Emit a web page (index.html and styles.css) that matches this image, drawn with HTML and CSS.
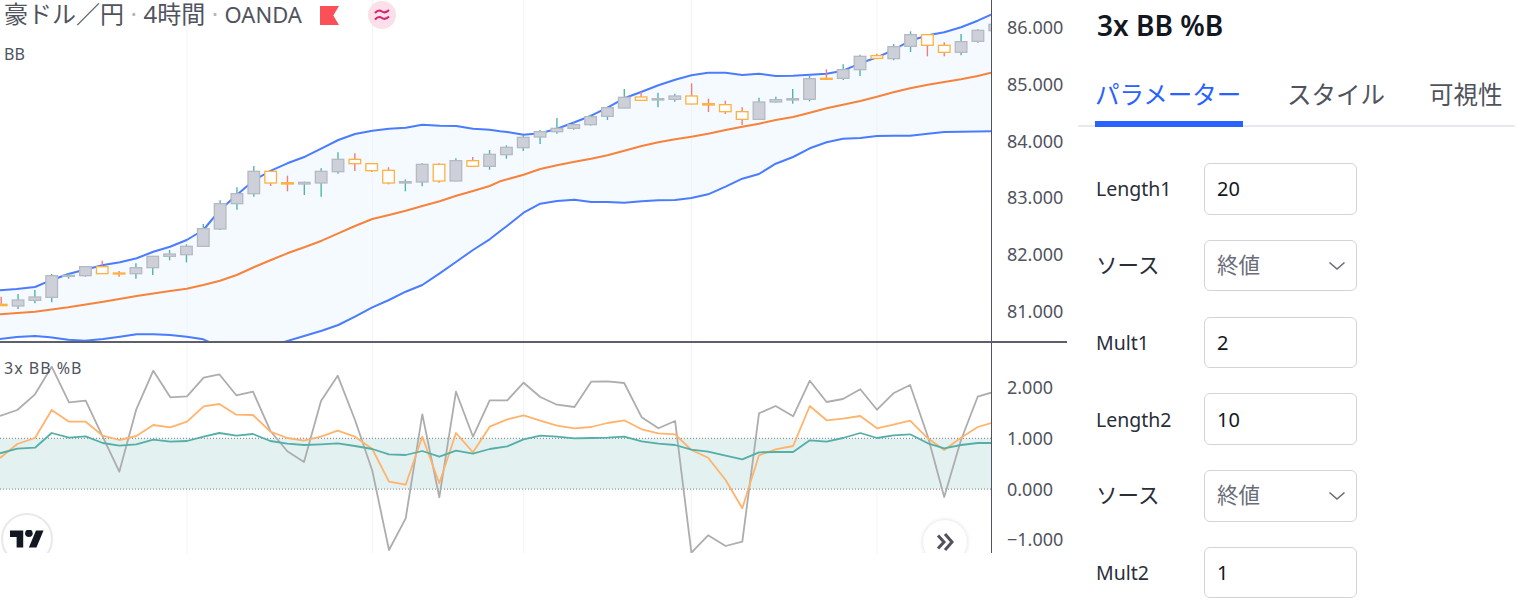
FILE: index.html
```html
<!DOCTYPE html>
<html lang="ja">
<head>
    <meta charset="UTF-8">
    <meta name="viewport" content="width=device-width, initial-scale=1.0">
    <title>3x BB %B</title>
    <link rel="stylesheet" href="styles.css">
</head>
<body>
    <div class="chart">
        <!-- Price pane -->
        <div class="pane pane-main">
            <div class="plot">
                <svg id="price-plot" class="plot-svg" width="991" height="341"></svg>
                <div class="legend">
                    <div class="legend-title">
                        <span>豪ドル／円</span><span class="dot">·</span><span>4時間</span><span class="dot">·</span><span class="legend-source">OANDA</span>
                        <svg class="flag" width="19" height="19" viewBox="0 0 20 20"><path d="M0 0H20L14 10L20 20H0Z"/></svg>
                        <span class="badge">
                            <svg width="16" height="14" viewBox="0 0 16 14"><path d="M1 5C4 1.500 6 2 8 3.500C10 5 12 5 15 2M1 11.500C4 8 6 8.500 8 10C10 11.500 12 11.500 15 8.500"/></svg>
                        </span>
                    </div>
                    <div class="legend-name">BB</div>
                </div>
            </div>
            <div class="axis axis-main">
                <span>86.000</span>
                <span>85.000</span>
                <span>84.000</span>
                <span>83.000</span>
                <span>82.000</span>
                <span>81.000</span>
            </div>
        </div>

        <!-- Oscillator pane -->
        <div class="pane pane-sub">
            <div class="plot">
                <svg id="osc-plot" class="plot-svg" width="991" height="210"></svg>
                <div class="legend legend-sub">3x BB %B</div>
                <div class="logo">
                    <svg width="34" height="18" viewBox="0 4 36 18"><path d="M14 22H7V11H0V4h14v18zM28 22h-8l7.500-18h8L28 22z"/><circle cx="20" cy="7" r="4"/></svg>
                </div>
                <div class="go-latest">
                    <svg width="20" height="20" viewBox="0 0 20 20"><path d="M3 3.500L9 10L3 16.500M10 2L17 10L10 18"/></svg>
                </div>
            </div>
            <div class="axis axis-sub">
                <span>2.000</span>
                <span>1.000</span>
                <span>0.000</span>
                <span>−1.000</span>
            </div>
        </div>
    </div>

    <!-- Settings panel -->
    <div class="panel">
        <h2 class="panel-title">3x BB %B</h2>
        <div class="tabs">
            <div class="tab active">パラメーター</div>
            <div class="tab">スタイル</div>
            <div class="tab">可視性</div>
        </div>
        <div class="fields">
            <div class="field-label">Length1</div>
            <div class="field-box">20</div>

            <div class="field-label field-label-ja">ソース</div>
            <div class="field-box field-select"><span>終値</span>
                <svg width="18" height="10" viewBox="0 0 18 10"><path d="M1.500 1.500L9 8L16.500 1.500"/></svg>
            </div>

            <div class="field-label">Mult1</div>
            <div class="field-box">2</div>

            <div class="field-label">Length2</div>
            <div class="field-box">10</div>

            <div class="field-label field-label-ja">ソース</div>
            <div class="field-box field-select"><span>終値</span>
                <svg width="18" height="10" viewBox="0 0 18 10"><path d="M1.500 1.500L9 8L16.500 1.500"/></svg>
            </div>

            <div class="field-label">Mult2</div>
            <div class="field-box">1</div>
        </div>
    </div>

    <script src="chart.js"></script>
</body>
</html>
```

FILE: styles.css
```css
* {
    box-sizing: border-box;
}
body {
    margin: 0;
    height: 605px;
    overflow: hidden;
    display: flex;
    background-color: white;
    font-family: "Noto Sans", "Noto Sans CJK JP", sans-serif;
    color: #131722;
}

/* Chart */
.chart {
    width: 1067px;
    height: 553px;
    flex-shrink: 0;
    display: flex;
    flex-direction: column;
}
.pane {
    display: flex;
}
.pane-main {
    height: 343px;
    border-bottom: 2px solid #5d606b;
}
.pane-sub {
    height: 210px;
}
.plot {
    position: relative;
    width: 992px;
    overflow: hidden;
    border-right: 1px solid #50535e;
}
.plot-svg {
    display: block;
    filter: blur(0.3px);
}
.axis {
    flex: 1;
    display: flex;
    flex-direction: column;
    padding-left: 15px;
    font-size: 18px;
    color: #50535e;
}
.axis-main {
    margin-top: -1px;
    line-height: 56.8px;
}
.axis-sub {
    padding-top: 19px;
    line-height: 50.8px;
}

/* Legend */
.legend {
    position: absolute;
    top: 0;
    left: 4px;
    color: #50535e;
}
.legend-title {
    display: flex;
    align-items: center;
    height: 30px;
    font-size: 24px;
    line-height: 24px;
}
.legend-title > span:not(.badge) {
    margin-bottom: 3px;
}
.legend-source {
    font-size: 22px;
}
.legend-title > .dot {
    margin: 0 6.500px 3px;
    color: #b2b5be;
}
.flag {
    margin-left: 18px;
    fill: #fb5058;
}
.badge {
    display: flex;
    align-items: center;
    justify-content: center;
    width: 28px;
    height: 28px;
    margin-left: 29px;
    border-radius: 50%;
    background-color: #fce0e9;
}
.badge svg {
    fill: none;
    stroke: #d6256f;
    stroke-width: 2;
}
.legend-name {
    margin-top: 12px;
    font-size: 16px;
    line-height: 24px;
}
.legend-sub {
    top: 13px;
    font-size: 16px;
    line-height: 24px;
    letter-spacing: 1px;
}

/* Round buttons cut off by the bottom of the chart */
.logo {
    position: absolute;
    left: 1px;
    top: 170px;
    width: 52px;
    height: 52px;
    display: flex;
    align-items: center;
    justify-content: center;
    border: 2px solid #e9e9ea;
    border-radius: 50%;
    background-color: white;
    fill: #131722;
}
.go-latest {
    position: absolute;
    left: 923px;
    top: 177px;
    width: 44px;
    height: 44px;
    display: flex;
    align-items: center;
    justify-content: center;
    border-radius: 50%;
    background-color: white;
    box-shadow: 0 0 4px rgba(19, 23, 34, 0.16);
}
.go-latest svg {
    fill: none;
    stroke: #50535e;
    stroke-width: 3;
}

/* Settings panel */
.panel {
    width: 437px;
    margin-left: 11px;
}
.panel-title {
    margin: 0;
    height: 50px;
    padding-left: 19px;
    font-size: 28px;
    font-weight: 600;
    line-height: 50px;
}
.tabs {
    display: flex;
    gap: 44px;
    height: 77px;
    padding-left: 17px;
    border-bottom: 2px solid #e6e9f0;
}
.tab {
    height: 77px;
    font-size: 24.500px;
    line-height: 90px;
    color: #50535e;
}
.tab.active {
    width: 148px;
    color: #2962ff;
    border-bottom: 6px solid #2962ff;
}
.fields {
    display: grid;
    grid-template-columns: 108px 153px;
    grid-auto-rows: 51.500px;
    row-gap: 25.300px;
    padding: 36px 0 0 18px;
    align-items: center;
}
.field-label {
    font-size: 19.500px;
    color: #2a2e39;
}
.field-label-ja {
    font-size: 21.500px;
    padding-bottom: 4px;
}
.field-box {
    height: 51.500px;
    display: flex;
    align-items: center;
    padding-left: 12px;
    font-size: 20px;
    border: 1px solid #d1d4dc;
    border-radius: 6px;
}
.field-select {
    justify-content: space-between;
    padding-right: 10px;
    color: #6a6d78;
}
.field-select span {
    font-size: 21.500px;
    padding-bottom: 4px;
}
.field-select svg {
    fill: none;
    stroke: #6a6d78;
    stroke-width: 1.6;
}
```

FILE: chart.js
```javascript
const SVG_NS = "http://www.w3.org/2000/svg";

// Traced points: [x, y] with the left half and the right half of the chart measured apart
const toLeft = (pts) => pts.map(([x, y]) => [x / 3, y / 3]);
const toRight = (pts) => pts.map(([x, y]) => [500 + x / 2.753, y / 3]);
const trace = (left, right) => toLeft(left).concat(toRight(right));

const upperBand = trace(
    [[0,871],[50,867],[105,861],[150,842],[205,822],[260,808],[310,795],[360,787],[410,775],[460,755],[510,740],[560,720],[610,690],[660,630],[710,585],[763,540],[813,512],[862,490],[915,470],[965,445],[1015,420],[1065,402],[1117,392],[1167,386],[1217,383],[1267,374],[1319,377],[1369,378],[1419,386],[1469,389]],
    [[0,394],[20,396],[65,404],[111,400],[157,386],[205,367],[251,347],[296,323],[342,295],[390,275],[436,256],[482,239],[527,226],[573,218],[621,218],[667,225],[713,221],[759,228],[807,227],[853,224],[899,221],[944,212],[992,190],[1038,172],[1083,150],[1129,122],[1178,106],[1223,97],[1269,82],[1315,62],[1352,44]]
);
const lowerBand = trace(
    [[0,1017],[50,1011],[105,1008],[150,1012],[205,1019],[255,1022],[310,1017],[360,1010],[410,1003],[460,1003],[510,1005],[560,1010],[610,1018],[640,1032],[740,1080],[830,1036],[855,1025],[915,1007],[965,992],[1015,975],[1065,950],[1117,922],[1167,900],[1217,875],[1267,855],[1319,820],[1369,785],[1419,750],[1469,718]],
    [[0,694],[20,677],[65,638],[111,611],[157,603],[205,599],[251,606],[296,606],[342,608],[390,604],[436,601],[482,600],[527,594],[573,583],[621,560],[667,536],[713,522],[759,491],[807,471],[853,445],[899,427],[944,416],[992,414],[1038,408],[1083,407],[1129,407],[1178,401],[1223,396],[1269,395],[1352,394]]
);
const basis = trace(
    [[0,943],[105,935],[205,922],[310,905],[410,888],[510,873],[560,866],[610,855],[660,842],[710,825],[763,801],[813,780],[862,760],[915,741],[965,722],[1015,700],[1065,678],[1117,657],[1167,645],[1217,632],[1267,618],[1319,604],[1369,587],[1419,573],[1469,558]],
    [[0,544],[65,524],[111,507],[157,496],[205,485],[251,476],[296,466],[342,452],[390,438],[436,427],[482,418],[527,410],[573,401],[621,390],[667,380],[713,371],[759,360],[807,351],[853,338],[899,325],[944,314],[992,303],[1038,290],[1083,277],[1129,265],[1178,254],[1223,246],[1269,238],[1315,228],[1352,218]]
);
const grayOsc = trace(
    [[0,228],[52,210],[105,163],[155,80],[207,187],[257,182],[308,290],[358,395],[409,208],[460,92],[511,172],[561,169],[611,113],[658,103],[709,166],[759,155],[811,272],[862,334],[912,366],[963,183],[1013,107],[1065,240],[1117,392],[1167,630],[1217,535],[1267,223],[1318,472],[1368,155],[1419,290],[1469,181]],
    [[20,181],[65,128],[111,171],[157,194],[205,201],[251,125],[296,124],[342,129],[390,232],[436,265],[482,243],[527,638],[573,586],[621,618],[667,605],[713,220],[759,198],[807,229],[853,122],[899,186],[944,177],[992,148],[1038,209],[1083,160],[1129,135],[1178,290],[1223,471],[1269,300],[1315,170],[1352,158]]
);
const orangeOsc = trace(
    [[0,354],[52,312],[105,294],[155,210],[207,245],[257,245],[308,287],[358,300],[409,288],[460,255],[511,262],[561,245],[611,199],[658,192],[709,224],[759,225],[811,275],[862,294],[912,302],[963,290],[1013,272],[1065,290],[1117,327],[1167,425],[1217,434],[1267,290],[1318,430],[1368,279],[1419,337],[1469,260]],
    [[20,238],[65,226],[111,242],[157,257],[205,265],[251,261],[296,249],[342,241],[390,268],[436,280],[482,283],[527,330],[573,353],[621,420],[667,505],[713,346],[759,328],[807,318],[853,198],[899,241],[944,236],[992,228],[1038,265],[1083,254],[1129,242],[1178,295],[1223,330],[1269,293],[1315,261],[1352,249]]
);
const tealOsc = trace(
    [[0,340],[52,326],[105,323],[155,279],[207,293],[257,289],[308,309],[358,317],[409,313],[460,299],[511,305],[561,303],[611,290],[658,279],[709,287],[759,282],[811,303],[862,311],[912,315],[963,313],[1013,310],[1065,318],[1117,327],[1167,343],[1217,345],[1267,333],[1318,350],[1368,332],[1419,341],[1469,327]],
    [[20,319],[65,298],[111,287],[157,290],[205,295],[251,294],[296,293],[342,290],[390,304],[436,311],[482,315],[527,329],[573,335],[621,347],[667,358],[713,337],[759,336],[807,336],[853,301],[899,305],[944,294],[992,279],[1038,294],[1083,286],[1129,283],[1178,310],[1223,325],[1269,315],[1315,309],[1352,309]]
);

// Candles: [wick top, body top, body bottom, wick bottom, "u" or "d"], y traced at 3x
const candles = [
    [890,913,917,917,"d"],[882,900,918,927,"u"],[870,891,901,910,"u"],[822,827,892,907,"u"],[820,826,829,836,"u"],
    [799,800,827,830,"u"],[782,800,821,821,"d"],[813,819,822,830,"d"],[790,803,821,836,"u"],[768,769,803,825,"u"],
    [750,762,769,781,"u"],[733,739,764,787,"u"],[672,686,739,739,"u"],[601,611,687,690,"u"],[562,581,611,629,"u"],
    [498,514,581,590,"u"],[514,514,549,558,"d"],[527,548,552,574,"d"],[545,547,552,585,"u"],[505,514,549,590,"u"],
    [457,478,515,521,"u"],[460,478,491,513,"d"],[490,491,512,516,"d"],[502,511,549,553,"d"],[538,545,549,574,"u"],
    [490,493,546,559,"u"],[490,493,543,548,"d"],[475,482,543,544,"u"],[471,482,499,499,"d"],[450,463,499,509,"u"],
    [436,442,464,476,"u"],[405,412,443,453,"u"],[390,395,411,432,"u"],[354,385,395,401,"u"],[366,374,385,389,"u"],
    [344,350,374,377,"u"],[320,323,349,360,"u"],[267,292,324,325,"u"],[275,291,301,302,"d"],[278,296,300,322,"u"],
    [281,288,298,305,"u"],[250,288,312,313,"d"],[296,311,315,336,"d"],[302,314,335,342,"d"],[322,335,358,375,"d"],
    [293,306,358,359,"u"],[290,299,306,308,"u"],[267,296,300,311,"u"],[228,236,298,304,"u"],[208,235,237,240,"d"],
    [193,209,235,240,"u"],[164,169,209,228,"u"],[161,167,175,178,"d"],[132,140,176,181,"u"],[94,104,139,156,"u"],
    [104,104,136,169,"d"],[127,136,157,169,"d"],[102,125,157,166,"u"],[88,91,124,128,"u"],[60,73,92,95,"u"]
];

const gridLines = [187, 372.5, 523.6, 691.4, 877];

const pointsAttr = (pts) => pts.map(([x, y]) => `${x.toFixed(1)},${y.toFixed(1)}`).join(" ");

const add = (parent, tag, attrs) => {
    const el = document.createElementNS(SVG_NS, tag);
    Object.entries(attrs).forEach(([key, value]) => el.setAttribute(key, value));
    parent.appendChild(el);
    return el;
};

const addLine = (svg, pts, color, width) => {
    add(svg, "polyline", {
        points: pointsAttr(pts), fill: "none", stroke: color, "stroke-width": width, "stroke-linejoin": "round"
    });
};

const addGrid = (svg, height) => {
    gridLines.forEach((x) => {
        add(svg, "line", { x1: x, x2: x, y1: 0, y2: height, stroke: "#f0f3fa", "stroke-width": 1 });
    });
};

// Price pane
const price = document.getElementById("price-plot");
add(price, "polygon", { points: pointsAttr(upperBand.concat([...lowerBand].reverse())), fill: "#f4faff" });
addGrid(price, 341);
addLine(price, upperBand, "#4a7cff", 2);
addLine(price, lowerBand, "#4a7cff", 2);
addLine(price, basis, "#f7833a", 2);

candles.forEach(([wickTop, top, bottom, wickBottom, dir], i) => {
    const x = 1.2 + 16.84 * i;
    const up = dir === "u";
    add(price, "line", {
        x1: x, x2: x, y1: wickTop / 3, y2: wickBottom / 3,
        stroke: up ? "#4db6ac" : "#f27c7c", "stroke-width": 1.4
    });
    add(price, "rect", {
        x: x - 5.8, y: top / 3, width: 11.6, height: Math.max((bottom - top) / 3, 1),
        fill: up ? "#ced0d9" : "white", stroke: up ? "#b6b9c2" : "#ffb13d", "stroke-width": 1.3
    });
});

// Oscillator pane, traced from a crop that starts at y = 340 of the page
const paneTop = 343 - 340;
const osc = document.getElementById("osc-plot");
const toOsc = (pts) => pts.map(([x, y]) => [x, y - paneTop]);
addGrid(osc, 210);
add(osc, "rect", { x: 0, y: 98.3 - paneTop, width: 991, height: 50.8, fill: "#e3f1f0" });
[98.3, 149.1].forEach((y) => {
    add(osc, "line", {
        x1: 0, x2: 991, y1: y - paneTop, y2: y - paneTop,
        stroke: "#787b86", "stroke-width": 1, "stroke-dasharray": "1 2"
    });
});
addLine(osc, toOsc(grayOsc), "#adadad", 1.8);
addLine(osc, toOsc(orangeOsc), "#ffb36b", 1.8);
addLine(osc, toOsc(tealOsc), "#55aea8", 1.8);
```
